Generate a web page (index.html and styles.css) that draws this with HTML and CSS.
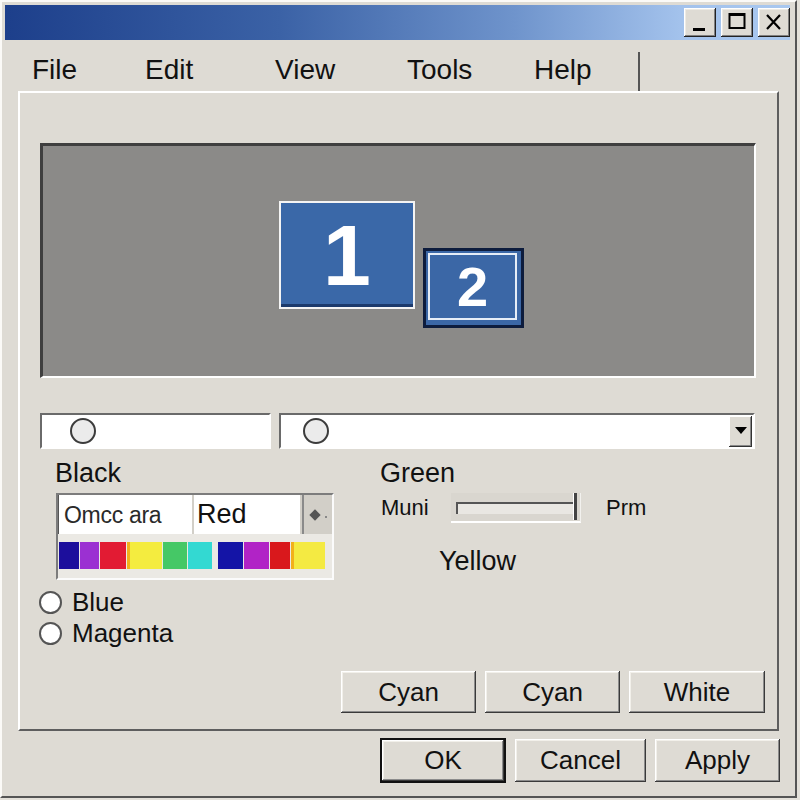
FILE: index.html
```html
<!DOCTYPE html>
<html>
	<head>
		<meta charset="utf-8">
		<title>Display</title>
		<link rel="stylesheet" href="styles.css">
	</head>
	<body>
		<div class="window">
			<div class="titlebar">
				<button class="cap-btn"><svg width="32" height="29" viewBox="0 0 32 29"><rect x="9" y="20" width="12" height="3" fill="#000"/></svg></button>
				<button class="cap-btn"><svg width="32" height="29" viewBox="0 0 32 29"><rect x="8.5" y="6" width="15" height="14" fill="none" stroke="#000" stroke-width="2"/><rect x="8" y="5" width="16" height="3" fill="#000"/></svg></button>
				<button class="cap-btn"><svg width="32" height="29" viewBox="0 0 32 29"><path d="M9 7 L22 21 M22 7 L9 21" stroke="#000" stroke-width="2.2" fill="none"/></svg></button>
			</div>
			<div class="menubar">
				<span class="menu-item m-file">File</span>
				<span class="menu-item m-edit">Edit</span>
				<span class="menu-item m-view">View</span>
				<span class="menu-item m-tools">Tools</span>
				<span class="menu-item m-help">Help</span>
				<span class="menu-sep"></span>
			</div>
			<div class="group">
				<div class="preview">
					<div class="monitor mon-1">1</div>
					<div class="monitor mon-2"><div class="mon-inner">2</div></div>
				</div>
				<div class="fields">
					<div class="field field-short"><span class="knob"></span></div>
					<div class="field field-long">
						<span class="knob"></span>
						<span class="drop-btn"><svg width="12" height="8" viewBox="0 0 12 8"><path d="M0 0 H12 L6 7 Z" fill="#000"/></svg></span>
					</div>
				</div>
				<div class="lower">
					<div class="col-left">
						<div class="label">Black</div>
						<div class="combo">
							<div class="combo-row">
								<div class="combo-text">Omcc ara</div>
								<div class="combo-value">Red</div>
								<div class="combo-btn"><span class="diamond"></span><span class="dot"></span></div>
							</div>
							<div class="swatches">
								<span class="sw sw1"></span>
								<span class="sw sw2"></span>
								<span class="sw sw3"></span>
								<span class="sw sw4"></span>
								<span class="sw sw5"></span>
								<span class="sw sw6"></span>
								<span class="sw-gap"></span>
								<span class="sw sw7"></span>
								<span class="sw sw8"></span>
								<span class="sw sw9"></span>
								<span class="sw sw10"></span>
							</div>
						</div>
						<div class="radio"><span class="radio-dot"></span>Blue</div>
						<div class="radio"><span class="radio-dot"></span>Magenta</div>
					</div>
					<div class="col-right">
						<div class="label">Green</div>
						<div class="slider-row">
							<span class="slider-min">Muni</span>
							<div class="trough">
								<div class="trough-fill"></div>
								<div class="trough-thumb"></div>
							</div>
							<span class="slider-max">Prm</span>
						</div>
						<div class="label yellow">Yellow</div>
					</div>
				</div>
				<div class="btn-row">
					<button class="btn btn-cyan">Cyan</button>
					<button class="btn btn-cyan">Cyan</button>
					<button class="btn btn-white">White</button>
				</div>
			</div>
			<div class="footer">
				<button class="btn btn-ok">OK</button>
				<button class="btn btn-cancel">Cancel</button>
				<button class="btn btn-apply">Apply</button>
			</div>
		</div>
	</body>
</html>
```

FILE: styles.css
```css
*{
	margin:0;
	padding:0;
	box-sizing:border-box;
}
body{
	background:#e4e1da;
	font-family:"Liberation Sans", Arial, sans-serif;
	color:#111;
}
.window{
	width:797px;
	height:798px;
	background:#dedbd4;
	border:2px solid;
	border-color:#fbfaf7 #555 #555 #fbfaf7;
	padding:3px 5px 0 3px;
}
.titlebar{
	height:35px;
	display:flex;
	justify-content:flex-end;
	gap:5px;
	padding-top:3px;
	background:linear-gradient(to right, #1d3f8b 0%, #3b62a6 35%, #6f94cc 65%, #a3c2ec 86%, #a9c8ef 100%);
}
.cap-btn{
	width:32px;
	height:29px;
	border:0;
	background:#dedbd4;
	box-shadow:inset -1px -1px #222, inset 1px 1px #fff, inset -2px -2px #808080, inset 2px 2px #eeebe4;
	display:block;
}
.cap-btn svg{
	display:block;
}
.menubar{
	height:51px;
	display:flex;
	align-items:flex-start;
	padding:14px 0 0 27px;
	font-size:28px;
	line-height:32px;
}
.menu-item{
	flex:0 0 auto;
}
.m-file{ width:113px; }
.m-edit{ width:130px; }
.m-view{ width:132px; }
.m-tools{ width:127px; }
.m-help{ width:104px; }
.menu-sep{
	width:2px;
	height:39px;
	margin-top:-2px;
	background:#555;
}
.group{
	margin-left:13px;
	width:761px;
	height:640px;
	border:2px solid;
	border-color:#fff #5e5e5e #5e5e5e #fff;
	display:flex;
	flex-direction:column;
}
.preview{
	position:relative;
	margin:50px 0 0 20px;
	width:716px;
	height:235px;
	background:#8b8a88;
	border-style:solid;
	border-width:3px 2px 2px 3px;
	border-color:#3f3f3f #fff #fff #3f3f3f;
}
.monitor{
	position:absolute;
	display:flex;
	align-items:center;
	justify-content:center;
	color:#fff;
	font-weight:bold;
	line-height:1;
}
.mon-1{
	left:236px;
	top:55px;
	width:136px;
	height:108px;
	border:2px solid #f4f4f4;
	background:#3a68a8;
	box-shadow:inset 0 -3px #1c3a6c;
	font-size:86px;
}
.mon-2{
	left:380px;
	top:102px;
	width:101px;
	height:80px;
	border:3px solid #0d1c3d;
	background:#3b67a6;
	padding:2px 4px 5px 2px;
}
.mon-inner{
	width:100%;
	height:100%;
	border:2px solid #e6edf7;
	display:flex;
	align-items:center;
	justify-content:center;
	font-size:56px;
}
.fields{
	display:flex;
	gap:8px;
	margin:35px 0 0 20px;
}
.field{
	height:36px;
	background:#fff;
	border:2px solid;
	border-color:#6a6a6a #fff #fff #6a6a6a;
	display:flex;
	align-items:center;
}
.field-short{
	width:231px;
	padding-left:28px;
}
.field-long{
	width:476px;
	padding-left:22px;
	justify-content:space-between;
}
.knob{
	width:26px;
	height:26px;
	border-radius:50%;
	border:2px solid #3c3c3c;
	background:#ebebeb;
}
.drop-btn{
	width:23px;
	height:31px;
	margin-right:1px;
	background:#dedbd4;
	box-shadow:inset -1px -1px #333, inset 1px 1px #fff, inset -2px -2px #888;
	display:flex;
	align-items:center;
	justify-content:center;
}
.lower{
	display:flex;
	margin-top:9px;
	padding-left:19px;
}
.col-left{
	width:341px;
}
.label{
	font-size:27px;
	line-height:30px;
}
.col-left .label{
	margin-left:16px;
}
.combo{
	margin:5px 0 0 17px;
	width:278px;
	height:87px;
	border:2px solid;
	border-color:#7c7c7c #fbfbfb #fbfbfb #7c7c7c;
	background:#ebe9e4;
}
.combo-row{
	display:flex;
	height:39px;
	background:#d2cfc8;
}
.combo-text{
	width:134px;
	background:#fff;
	border-left:1px solid #555;
	font-size:23px;
	color:#2a2a2a;
	padding:7px 0 0 5px;
	letter-spacing:-0.3px;
}
.combo-value{
	width:106px;
	margin-left:2px;
	background:#fff;
	font-size:27px;
	padding:4px 0 0 3px;
}
.combo-btn{
	flex:1;
	margin-left:2px;
	border-left:2px solid #8a8a8a;
	display:flex;
	align-items:center;
	padding-left:7px;
	gap:6px;
}
.diamond{
	width:8px;
	height:8px;
	background:#555;
	transform:rotate(45deg);
}
.dot{
	width:2px;
	height:2px;
	background:#888;
	margin-top:4px;
}
.swatches{
	display:flex;
	height:27px;
	margin:8px 0 0 1px;
}
.sw{
	height:27px;
	margin-right:1px;
}
.sw1{ width:20px; background:#1c0e9c; }
.sw2{ width:19px; background:#9b30d2; }
.sw3{ width:26px; background:#e21b33; }
.sw4{ width:35px; background:linear-gradient(to right, #f2b01a 3px, #f4ec3f 3px); }
.sw5{ width:24px; background:#45c866; }
.sw6{ width:24px; background:#33d9d2; }
.sw-gap{ width:5px; }
.sw7{ width:25px; background:#1414a6; }
.sw8{ width:25px; background:#b123c6; }
.sw9{ width:20px; background:#d9181c; }
.sw10{ width:34px; background:linear-gradient(to right, #f2b01a 3px, #f4ea42 3px); }
.radio{
	display:flex;
	align-items:center;
	gap:10px;
	font-size:26px;
	line-height:31px;
}
.radio:first-of-type{
	margin-top:7px;
}
.col-left .combo + .radio{
	margin-top:7px;
}
.radio-dot{
	width:23px;
	height:23px;
	border-radius:50%;
	border:2px solid #555;
	background:#fff;
}
.col-right{
	padding-left:0;
}
.slider-row{
	display:flex;
	align-items:center;
	height:30px;
	margin-top:5px;
}
.slider-min{
	width:71px;
	padding-left:1px;
	font-size:22px;
}
.slider-max{
	margin-left:25px;
	font-size:22px;
}
.trough{
	width:130px;
	height:30px;
	background:#d9d6cf;
	border-bottom:2px solid #fff;
	border-right:1px solid #f2f1ee;
	display:flex;
	align-items:flex-start;
	padding:9px 0 0 5px;
}
.trough-fill{
	flex:1;
	height:12px;
	border-top:2px solid #555;
	border-left:2px solid #555;
	background:#e9e7e2;
}
.trough-thumb{
	width:4px;
	height:27px;
	margin:-9px 3px 0 0;
	background:#444;
	border-left:1px solid #fff;
}
.yellow{
	margin:23px 0 0 59px;
}
.btn-row{
	margin-top:auto;
	margin-bottom:16px;
	padding-right:12px;
	display:flex;
	justify-content:flex-end;
	gap:9px;
}
.btn{
	height:42px;
	border:0;
	background:#dedbd4;
	box-shadow:inset -1px -1px #3a3a3a, inset 1px 1px #fff, inset -2px -2px #8c8c8c, inset 2px 2px #f2f0ea;
	font-family:"Liberation Sans", Arial, sans-serif;
	font-size:26px;
	color:#111;
	display:flex;
	align-items:center;
	justify-content:center;
}
.btn-cyan{ width:135px; }
.btn-white{ width:136px; }
.footer{
	margin-top:7px;
	padding-right:10px;
	display:flex;
	justify-content:flex-end;
	align-items:flex-start;
	gap:9px;
}
.btn-ok{
	width:126px;
	height:45px;
	border:2px solid #111;
}
.btn-cancel{
	width:131px;
	height:43px;
	margin-top:1px;
}
.btn-apply{
	width:125px;
	height:43px;
	margin-top:1px;
}
```
